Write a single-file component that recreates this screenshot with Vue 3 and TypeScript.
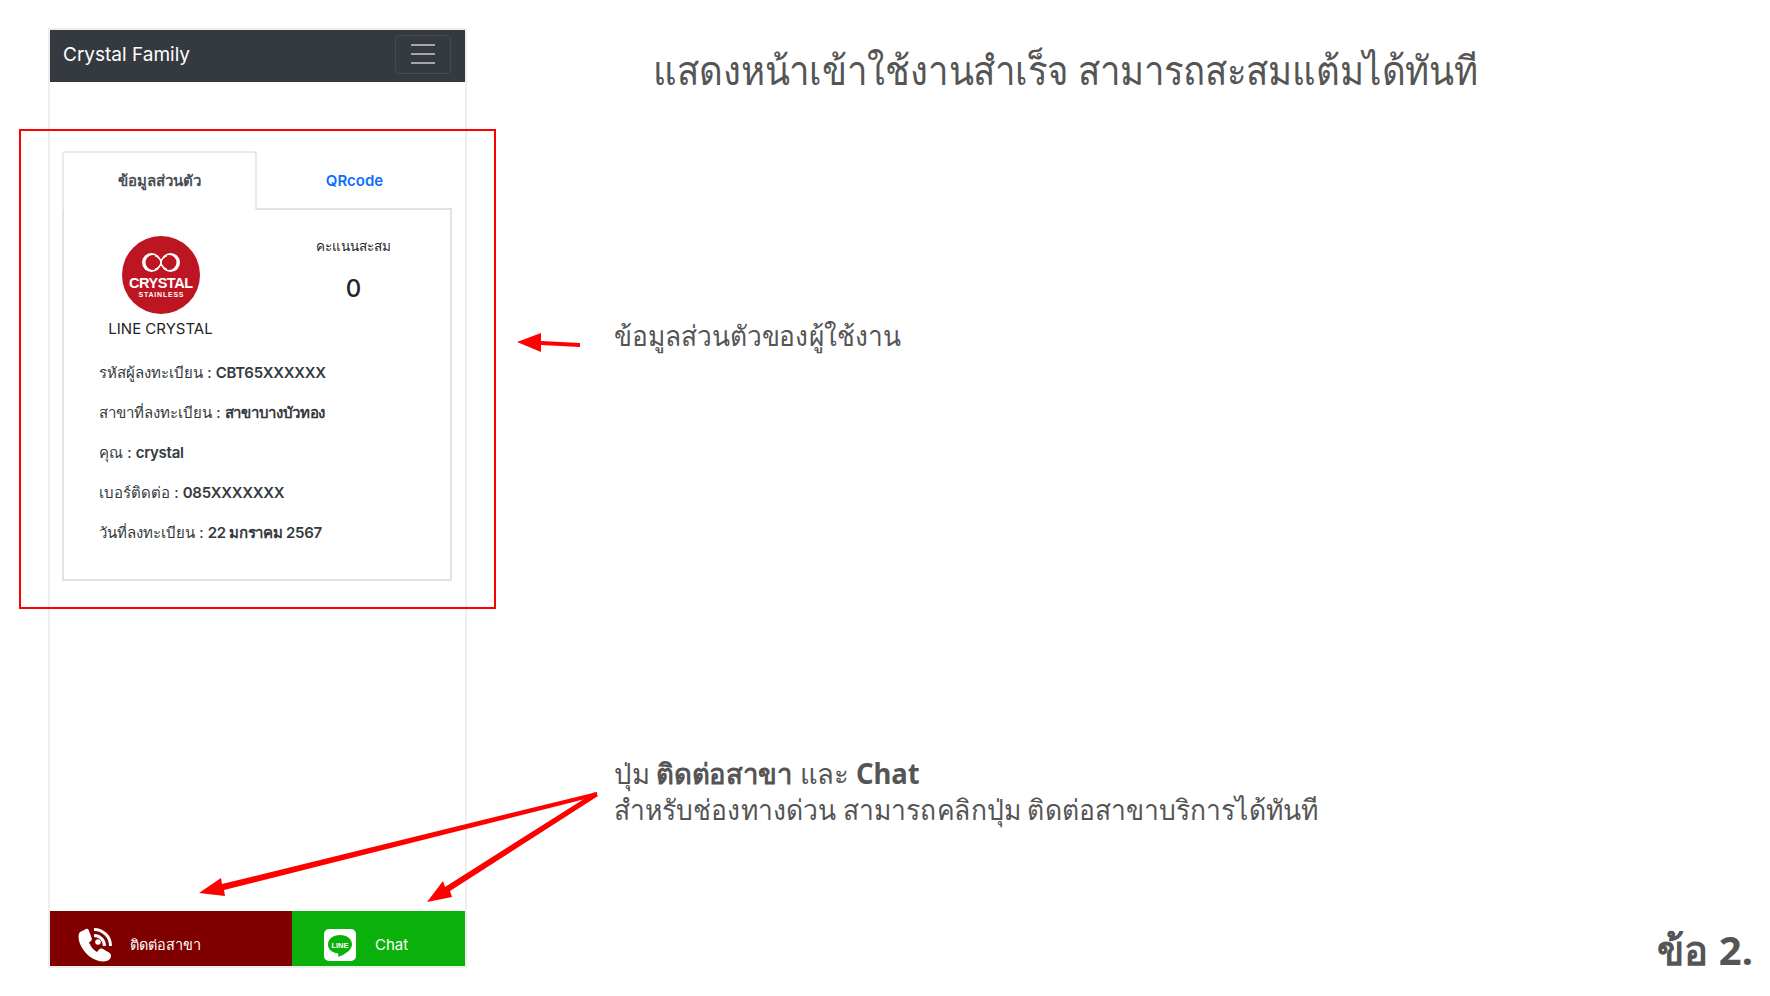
<template>
  <div class="page">
    <section class="phone">
      <header class="navbar">
        <span class="brand">Crystal Family</span>
        <button class="toggler" aria-label="menu">
          <i></i><i></i><i></i>
        </button>
      </header>

      <main class="content">
        <nav class="tabs">
          <a class="tab active">ข้อมูลส่วนตัว</a>
          <a class="tab">QRcode</a>
        </nav>
        <div class="card">
          <div class="top">
            <div class="profile">
              <svg class="logo" viewBox="0 0 78 78">
                <circle cx="39" cy="39" r="39" fill="#bd1522" />
                <circle cx="29.500" cy="26.500" r="9.500" fill="#fff" />
                <circle cx="48.500" cy="26.500" r="9.500" fill="#fff" />
                <circle cx="31" cy="26.500" r="7.500" fill="#bd1522" />
                <circle cx="47" cy="26.500" r="7.500" fill="#bd1522" />
                <path d="M33 19.500c3 1 6 4 6 7s3 6 6 7M45 19.500c-3 1-6 4-6 7s-3 6-6 7" fill="none" stroke="#fff" stroke-width="1.500" />
                <text x="39" y="52" text-anchor="middle" textLength="64" class="logo-main">CRYSTAL</text>
                <text x="39" y="61" text-anchor="middle" textLength="45" class="logo-sub">STAINLESS</text>
              </svg>
              <div class="name">LINE CRYSTAL</div>
            </div>
            <div class="score">
              <div class="score-label">คะแนนสะสม</div>
              <div class="score-value">0</div>
            </div>
          </div>
          <p v-for="row in rows" :key="row.label" class="row">
            {{ row.label }} : <b>{{ row.value }}</b>
          </p>
        </div>
      </main>

      <footer class="bottom">
        <a class="btn contact">
          <svg class="phone-icon" viewBox="0 0 34 34">
            <path fill="#fff" d="M8 1 2 4C0 6 0 12 3 18c3.500 7 10 13 18 15 3 .7 6 .7 9-.5 2-1 3-3 3-5 0-1.500-1-2-2-3l-6-3.500c-1.500-.8-3-.5-4 .5l-2 2.500c-3-1.500-6-5-8-9.500l2-1.500c1-1 1-2.500.5-3.500L11 3C10.500 1 9.500.5 8 1Z" />
            <path fill="none" stroke="#fff" stroke-width="3" d="M16 1.500c9 0 16.500 7 16.500 16.500M16 7.500c6 0 10.500 4.500 10.500 10.500" />
            <circle cx="20" cy="14" r="2.800" fill="#fff" />
          </svg>
          <span>ติดต่อสาขา</span>
        </a>
        <a class="btn chat">
          <svg class="line-icon" viewBox="0 0 32 32">
            <rect width="32" height="32" rx="5" fill="#fff" />
            <path fill="#0ab10a" d="M16 6C9 6 4 10 4 15.500c0 4.800 4 8 9.500 8.800.8.200 1 .6.800 1.400l-.2 1.300c0 .6.400.9 1 .6C18 26.500 28 22 28 15.500 28 10 23 6 16 6Z" />
            <text x="16" y="18.500" text-anchor="middle" class="line-text">LINE</text>
          </svg>
          <span class="chat-label">Chat</span>
        </a>
      </footer>
    </section>

    <section class="notes">
      <h1 class="title">แสดงหน้าเข้าใช้งานสำเร็จ สามารถสะสมแต้มได้ทันที</h1>
      <p class="note-profile">ข้อมูลส่วนตัวของผู้ใช้งาน</p>
      <div class="note-buttons">
        <p class="line-one">ปุ่ม <b>ติดต่อสาขา</b> และ <b>Chat</b></p>
        <p class="line-two">สำหรับช่องทางด่วน สามารถคลิกปุ่ม ติดต่อสาขาบริการได้ทันที</p>
      </div>
      <div class="step">ข้อ 2.</div>
    </section>

    <!-- annotations drawn on top of the screenshot -->
    <div class="highlight"></div>
    <svg class="arrows" viewBox="0 0 1770 996">
      <g fill="#fe0000">
        <path d="M517 342 541 333 541 341 580 343 580 347 541 345 541 352Z" />
        <path d="M199 893 221 878 222 884 597 792 597 796 224 890 225 896Z" />
        <path d="M427 902 443 881 445 887 595 792 598 796 450 891 452 897Z" />
      </g>
    </svg>
  </div>
</template>

<script setup lang="ts">
interface InfoRow {
  label: string;
  value: string;
}

const rows: InfoRow[] = [
  { label: "รหัสผู้ลงทะเบียน", value: "CBT65XXXXXX" },
  { label: "สาขาที่ลงทะเบียน", value: "สาขาบางบัวทอง" },
  { label: "คุณ", value: "crystal" },
  { label: "เบอร์ติดต่อ", value: "085XXXXXXX" },
  { label: "วันที่ลงทะเบียน", value: "22 มกราคม 2567" },
];
</script>

<style scoped>
* {
  box-sizing: border-box;
}

.page {
  position: relative;
  display: flex;
  width: 1770px;
  height: 996px;
  overflow: hidden;
  background: #fff;
  font-family: "Noto Sans", "Open Sans", "DejaVu Sans", sans-serif;
}

.phone {
  display: flex;
  flex-direction: column;
  width: 415px;
  height: 936px;
  margin: 30px 0 0 50px;
  box-shadow: 0 0 0 2px #eee;
  font-family: Inter, "Noto Sans", sans-serif;
  color: #212529;
}

.navbar {
  display: flex;
  align-items: center;
  justify-content: space-between;
  height: 52px;
  padding: 0 14px 4px 13px;
  background: #343a40;
}

.brand {
  color: #fff;
  font-size: 19px;
}

.toggler {
  display: flex;
  flex-direction: column;
  justify-content: center;
  gap: 7px;
  width: 56px;
  height: 39px;
  padding: 0 15px;
  border: 1px solid #454b51;
  border-radius: 4px;
  background: none;
}

.toggler i {
  display: block;
  height: 2px;
  background: #a4a6a9;
}

.content {
  flex: 1;
  padding: 69px 13px 0 12px;
}

.tabs {
  display: flex;
  height: 57px;
}

.tab {
  display: flex;
  align-items: center;
  justify-content: center;
  width: 195px;
  padding-top: 2px;
  font-size: 15px;
  font-weight: 600;
  color: #0d6efd;
}

.tab.active {
  position: relative;
  z-index: 1;
  height: 59px;
  padding: 0 0 2px;
  border: 2px solid #e9e9e9;
  border-bottom: 0;
  border-radius: 4px 4px 0 0;
  background: #fff;
  color: #495057;
}

.card {
  height: 373px;
  padding: 26px 35px 0;
  border: 2px solid #e2e2e2;
}

.top {
  display: grid;
  grid-template-columns: 1fr 1fr;
  margin: 0 -35px;
}

.profile {
  display: flex;
  flex-direction: column;
  align-items: center;
}

.logo {
  width: 78px;
  height: 78px;
}

.logo-main {
  font: 700 14.500px "Liberation Sans", sans-serif;
  fill: #fff;
}

.logo-sub {
  font: 700 7px "Liberation Sans", sans-serif;
  fill: #fff;
}

.name {
  margin-top: 5px;
  font-size: 15px;
  line-height: 20px;
}

.score {
  text-align: center;
}

.score-label {
  font-size: 13.500px;
  line-height: 20px;
}

.score-value {
  margin-top: 17px;
  font-size: 24px;
  font-weight: 500;
  line-height: 32px;
}

.row {
  margin: 0;
  font-size: 15px;
  line-height: 40px;
  color: #343a40;
}

.row b {
  font-weight: 600;
  letter-spacing: -0.3px;
}

.top + .row {
  margin-top: 14px;
}

.bottom {
  display: flex;
  height: 55px;
}

.btn {
  display: flex;
  align-items: center;
  padding-top: 12px;
  color: #fff;
  font-size: 14.500px;
}

.contact {
  width: 242px;
  padding-left: 28px;
  gap: 18px;
  background: #800000;
}

.chat {
  flex: 1;
  padding-left: 32px;
  gap: 19px;
  background: #0ab10a;
}

.chat-label {
  font-size: 15px;
}

.phone-icon {
  width: 34px;
  height: 34px;
}

.line-icon {
  width: 32px;
  height: 32px;
}

.line-text {
  font: 700 7.500px "Liberation Sans", sans-serif;
  fill: #fff;
}

.notes {
  flex: 1;
  position: relative;
  color: #555;
  padding-left: 149px;
}

.notes p {
  margin: 0;
  white-space: nowrap;
  transform-origin: left center;
}

.title {
  margin: 40px 0 0 39px;
  font-size: 40px;
  font-weight: 400;
  line-height: 60px;
  white-space: nowrap;
  transform: scaleX(0.915);
  transform-origin: left center;
}

.notes .note-profile {
  margin-top: 215px;
  font-size: 28px;
  line-height: 40px;
  transform: scaleX(0.94);
}

.note-buttons {
  margin-top: 400px;
  font-size: 28px;
  line-height: 36px;
}

.line-one {
  transform: scaleX(0.98);
}

.line-two {
  transform: scaleX(0.945);
}

.note-buttons b {
  font-weight: 700;
}

.step {
  position: absolute;
  right: 17px;
  bottom: 21px;
  font-size: 40px;
  font-weight: 700;
  line-height: 50px;
}

.highlight {
  position: absolute;
  left: 19px;
  top: 129px;
  width: 477px;
  height: 480px;
  border: 2px solid #fe0000;
}

.arrows {
  position: absolute;
  inset: 0;
  width: 1770px;
  height: 996px;
  pointer-events: none;
}
</style>
